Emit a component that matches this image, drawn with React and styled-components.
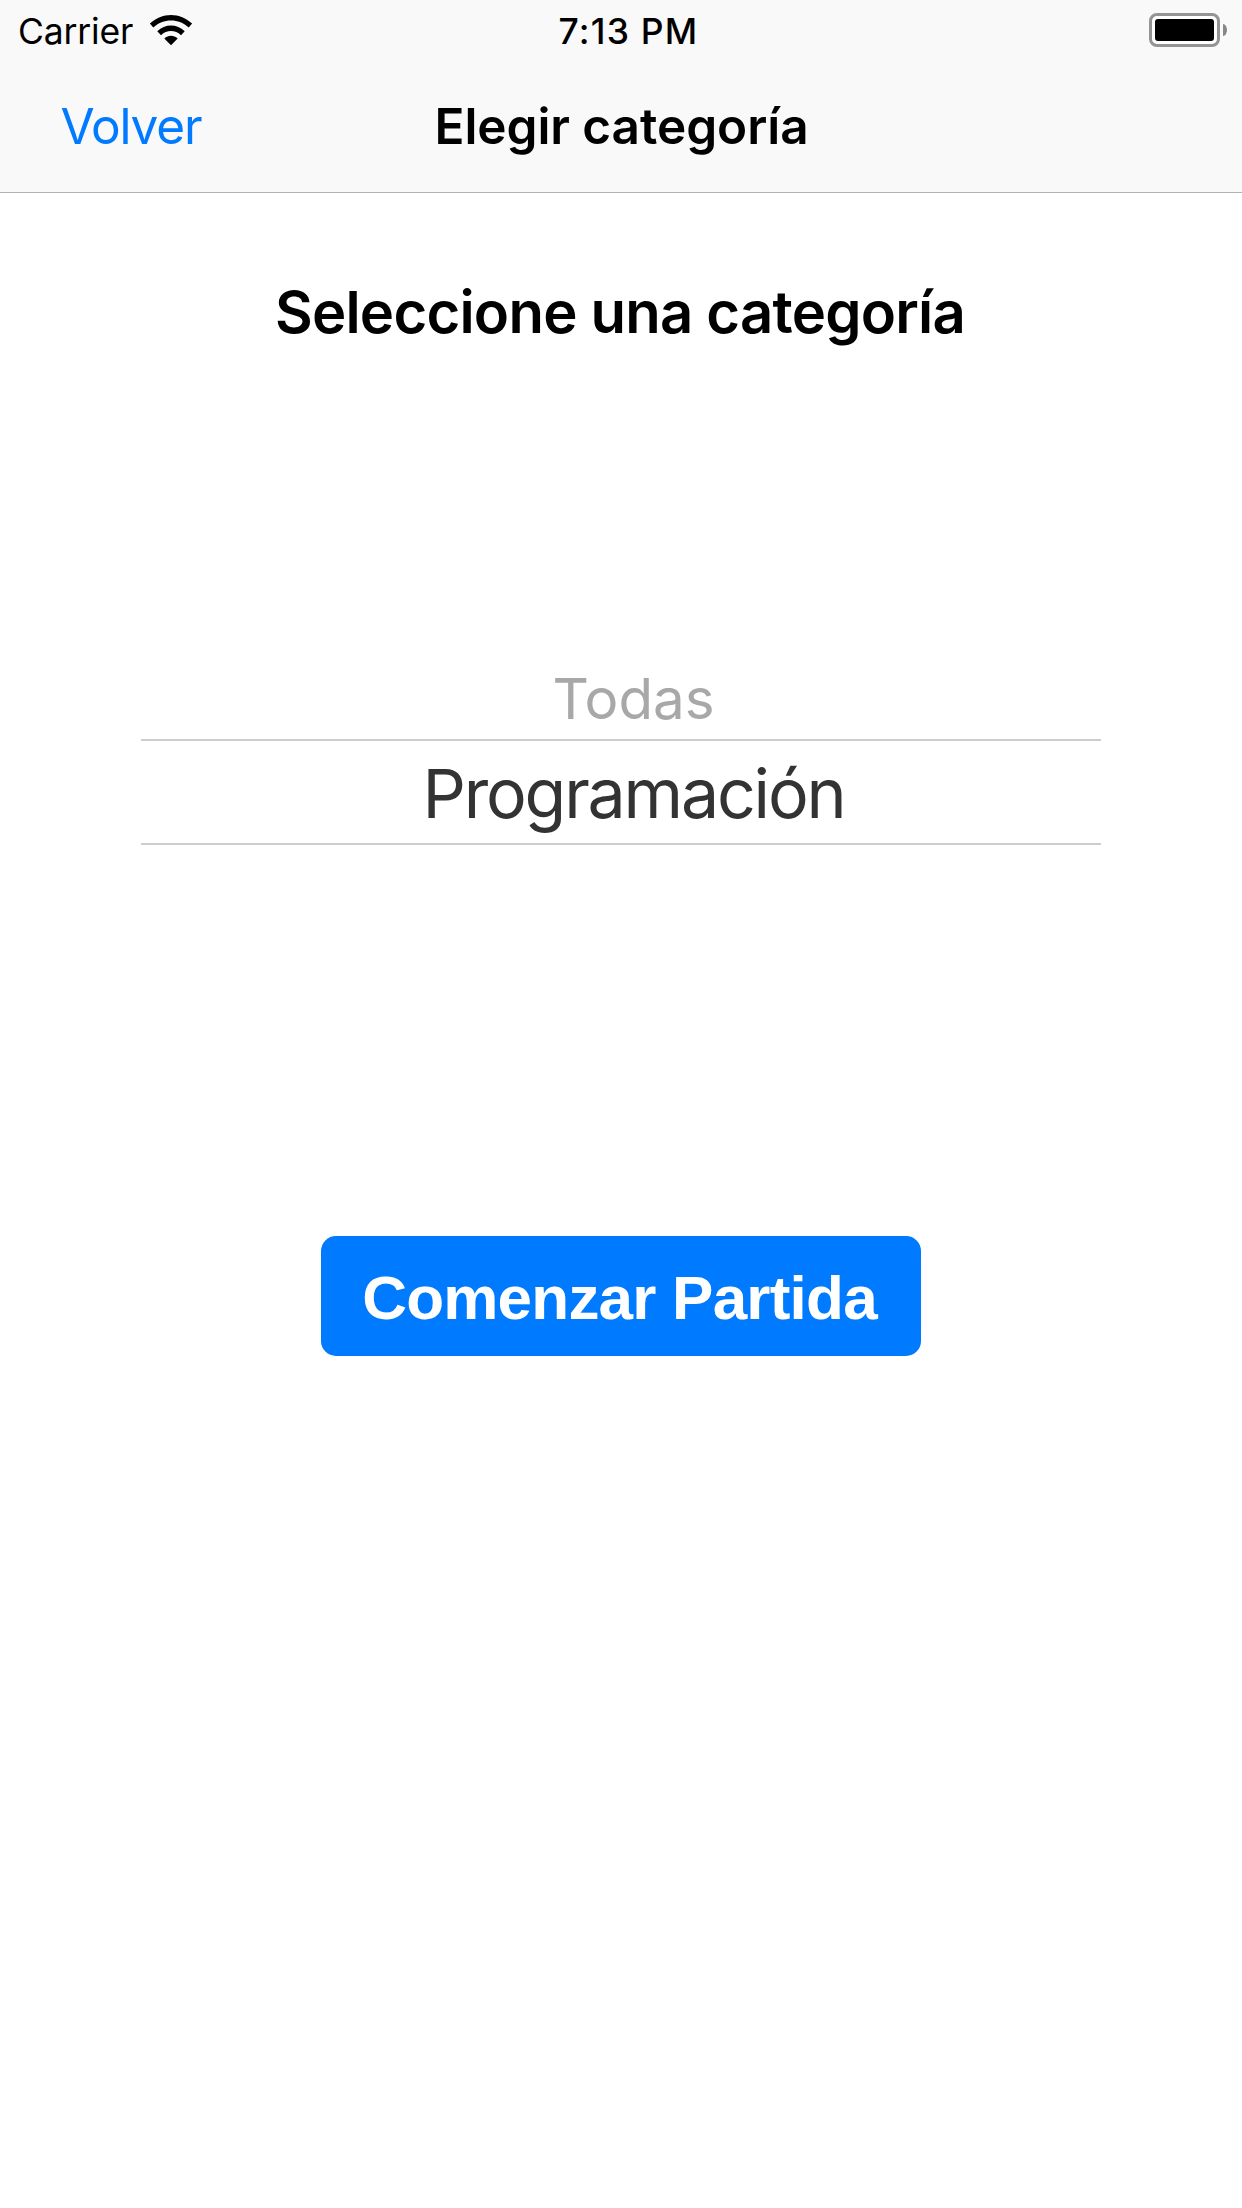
import React from "react";
import styled, { createGlobalStyle } from "styled-components";

const GlobalStyle = createGlobalStyle`
  *, *::before, *::after { box-sizing: border-box; }
  body {
    margin: 0;
    background: #fff;
    font-family: Inter, "Liberation Sans", sans-serif;
    color: #000;
  }
`;

const Screen = styled.div`
  display: flex;
  flex-direction: column;
  width: 1242px;
  min-height: 2208px;
  background: #fff;
`;

const Header = styled.header`
  height: 193px;
  background: #f9f9f9;
  border-bottom: 1px solid #b2b2b2;
`;

const Bar = styled.div`
  display: grid;
  grid-template-columns: 300px 1fr 300px;
  align-items: center;
  height: ${(p) => p.$height}px;
  padding-top: ${(p) => p.$top || 0}px;
`;

const Carrier = styled.div`
  display: flex;
  align-items: center;
  gap: 15px;
  padding-left: 18px;
  font-size: 35.5px;
  line-height: 44px;
  letter-spacing: -0.17px;
`;

const CarrierName = styled.span`
  padding-top: 2px;
`;

const WifiIcon = styled.svg`
  display: block;
  width: 46px;
  height: 32px;
  margin-bottom: 2px;
`;

const Clock = styled.time`
  padding: 2px 0 0 15px;
  text-align: center;
  font-size: 35.5px;
  font-weight: 500;
  line-height: 44px;
  letter-spacing: 1.2px;
`;

const Battery = styled.div`
  display: flex;
  align-items: center;
  justify-content: flex-end;
  gap: 3px;
  padding: 0 15px 2px 0;
`;

const BatteryCase = styled.div`
  width: 71px;
  height: 34px;
  padding: 3px;
  border: 3px solid #949494;
  border-radius: 8px;
  background: #fff;
`;

const BatteryLevel = styled.div`
  height: 100%;
  border-radius: 3px;
  background: #000;
`;

const BatteryCap = styled.div`
  width: 4px;
  height: 12px;
  border-radius: 0 4px 4px 0 / 0 6px 6px 0;
  background: #888;
`;

const BackButton = styled.button`
  justify-self: start;
  margin: 0;
  padding: 0 0 0 60.5px;
  border: 0;
  background: none;
  color: #007aff;
  font: 400 49.5px/60px Inter, sans-serif;
  letter-spacing: -1.15px;
`;

const NavTitle = styled.h1`
  margin: 0;
  padding-left: 1px;
  text-align: center;
  font-size: 49.5px;
  font-weight: 600;
  line-height: 60px;
  letter-spacing: -0.05px;
`;

const Main = styled.main`
  display: flex;
  flex-direction: column;
  align-items: center;
  padding-top: 83px;
`;

const Heading = styled.h2`
  margin: 0;
  padding-right: 2px;
  font-size: 58px;
  font-weight: 600;
  line-height: 72px;
  letter-spacing: -0.765px;
`;

const Picker = styled.div`
  display: flex;
  flex-direction: column;
  width: 960px;
  height: 648px;
  margin-top: 120px;
  padding-top: 189px;
  text-align: center;
`;

const Option = styled.div`
  height: 82px;
  padding-left: 25px;
  color: #a8a8a8;
  font-size: 56.5px;
  line-height: 84px;
`;

const SelectedOption = styled.div`
  height: 106px;
  padding: 1px 0 0 25px;
  border-top: 2px solid #cdcdcd;
  border-bottom: 2px solid #cdcdcd;
  color: #333;
  font-size: 68px;
  line-height: 102px;
  letter-spacing: -2.18px;
`;

const StartButton = styled.button`
  width: 600px;
  height: 120px;
  margin-top: 120px;
  padding: 4px 3px 0 0;
  border: 0;
  border-radius: 15px;
  background: #007aff;
  color: #fff;
  font: 700 62px/72px "Liberation Sans", sans-serif;
  letter-spacing: -0.78px;
  white-space: nowrap;
`;

function Wifi() {
  return (
    <WifiIcon viewBox="148 14 46 32" aria-hidden="true">
      <path d="M149.9 23.6C161.5 12 180.5 12 192.1 23.6L188.7 27.6C179.1 18.1 162.9 18.1 153.3 27.6Z" />
      <path d="M157.3 31.3C165 23.5 177 23.5 184.7 31.3L181 35.2C175.3 29.7 166.7 29.7 161 35.2Z" />
      <path d="M164.3 38.4C168.4 34.8 173.6 34.8 177.7 38.4L171 45.2Z" />
    </WifiIcon>
  );
}

export default function App() {
  return (
    <>
      <GlobalStyle />
      <Screen>
        <Header>
          <Bar $height={60} $top={2}>
            <Carrier>
              <CarrierName>Carrier</CarrierName>
              <Wifi />
            </Carrier>
            <Clock>7:13 PM</Clock>
            <Battery>
              <BatteryCase>
                <BatteryLevel />
              </BatteryCase>
              <BatteryCap />
            </Battery>
          </Bar>
          <Bar $height={132}>
            <BackButton>Volver</BackButton>
            <NavTitle>Elegir categoría</NavTitle>
          </Bar>
        </Header>
        <Main>
          <Heading>Seleccione una categoría</Heading>
          <Picker>
            <Option>Todas</Option>
            <SelectedOption>Programación</SelectedOption>
          </Picker>
          <StartButton>Comenzar Partida</StartButton>
        </Main>
      </Screen>
    </>
  );
}
